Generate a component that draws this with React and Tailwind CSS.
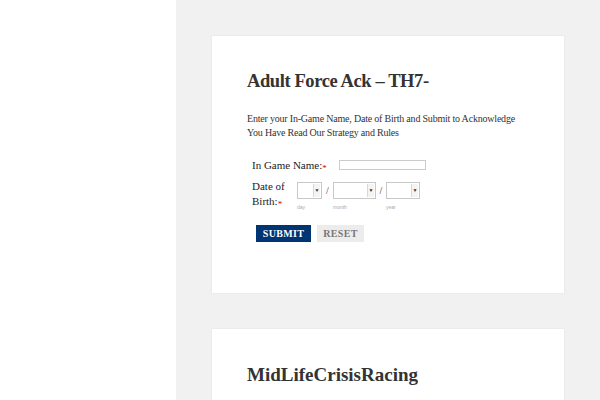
import React from 'react';

function Select({ w }) {
  return (
    <div className={`${w} h-[17px] flex border border-[#c8c8c8] bg-white`}>
      <div className="flex-1" />
      <div className="w-[7px] my-[1px] mr-[1px] border-l border-[#d8d8d8] bg-[#f4f4f4] flex items-center justify-center">
        <span className="text-[5px] leading-none text-[#333]">▼</span>
      </div>
    </div>
  );
}

function Req() {
  return <span className="text-[#d00] text-[9px] relative top-[2px]">*</span>;
}

export default function App() {
  return (
    <div className="w-[600px] h-[400px] flex overflow-hidden" style={{ fontFamily: '"Liberation Serif", serif' }}>
      <div className="w-[176px] bg-white shrink-0" />
      <main className="flex-1 bg-[#f1f1f1] pt-[36px] pl-[36px] flex flex-col gap-[36px]">
        <section className="shrink-0 w-[352px] h-[257px] bg-white pl-[35px] pr-[35px] pt-[30px] shadow-[0_0_1px_rgba(0,0,0,0.15)]">
          <h1 className="text-[18.5px] font-bold text-[#333] leading-[30px] tracking-[-0.4px]">Adult Force Ack – TH7-</h1>
          <p className="mt-[16px] text-[10px] leading-[14px] text-[#333] tracking-[-0.2px]">
            Enter your In-Game Name, Date of Birth and Submit to Acknowledge You Have Read Our Strategy and Rules
          </p>
          <div className="mt-[18px] pl-[5px]">
            <div className="flex items-center h-[14px]">
              <label className="w-[87px] text-[11px] text-[#222]">In Game Name:<Req /></label>
              <div className="w-[87px] h-[10px] border border-[#ccc] bg-white" />
            </div>
            <div className="flex mt-[7px]">
              <label className="w-[45px] text-[11px] leading-[15px] text-[#222]">Date of<br />Birth:<Req /></label>
              <div className="flex flex-col mt-[3px]">
                <div className="flex items-center">
                  <Select w="w-[25px]" />
                  <span className="w-[11px] text-center text-[10px] text-[#333]">/</span>
                  <Select w="w-[43px]" />
                  <span className="w-[10px] text-center text-[10px] text-[#333]">/</span>
                  <Select w="w-[34px]" />
                </div>
                <div className="flex text-[5px] text-[#aaa] mt-[5px]" style={{ fontFamily: '"Liberation Sans", sans-serif' }}>
                  <span className="w-[36px]">day</span>
                  <span className="w-[53px]">month</span>
                  <span>year</span>
                </div>
              </div>
            </div>
            <div className="flex gap-[6px] mt-[13px] ml-[4px]">
              <button className="w-[55px] h-[17px] bg-[#003473] text-white text-[10px] font-bold tracking-[0.3px]">SUBMIT</button>
              <button className="w-[47px] h-[17px] bg-[#ececec] text-[#777] text-[10px] font-bold tracking-[0.3px]">RESET</button>
            </div>
          </div>
        </section>
        <section className="shrink-0 w-[352px] h-[200px] bg-white pl-[35px] pt-[33px] shadow-[0_0_1px_rgba(0,0,0,0.15)]">
          <h2 className="text-[19px] font-bold text-[#333] leading-[26px]">MidLifeCrisisRacing</h2>
        </section>
      </main>
    </div>
  );
}
